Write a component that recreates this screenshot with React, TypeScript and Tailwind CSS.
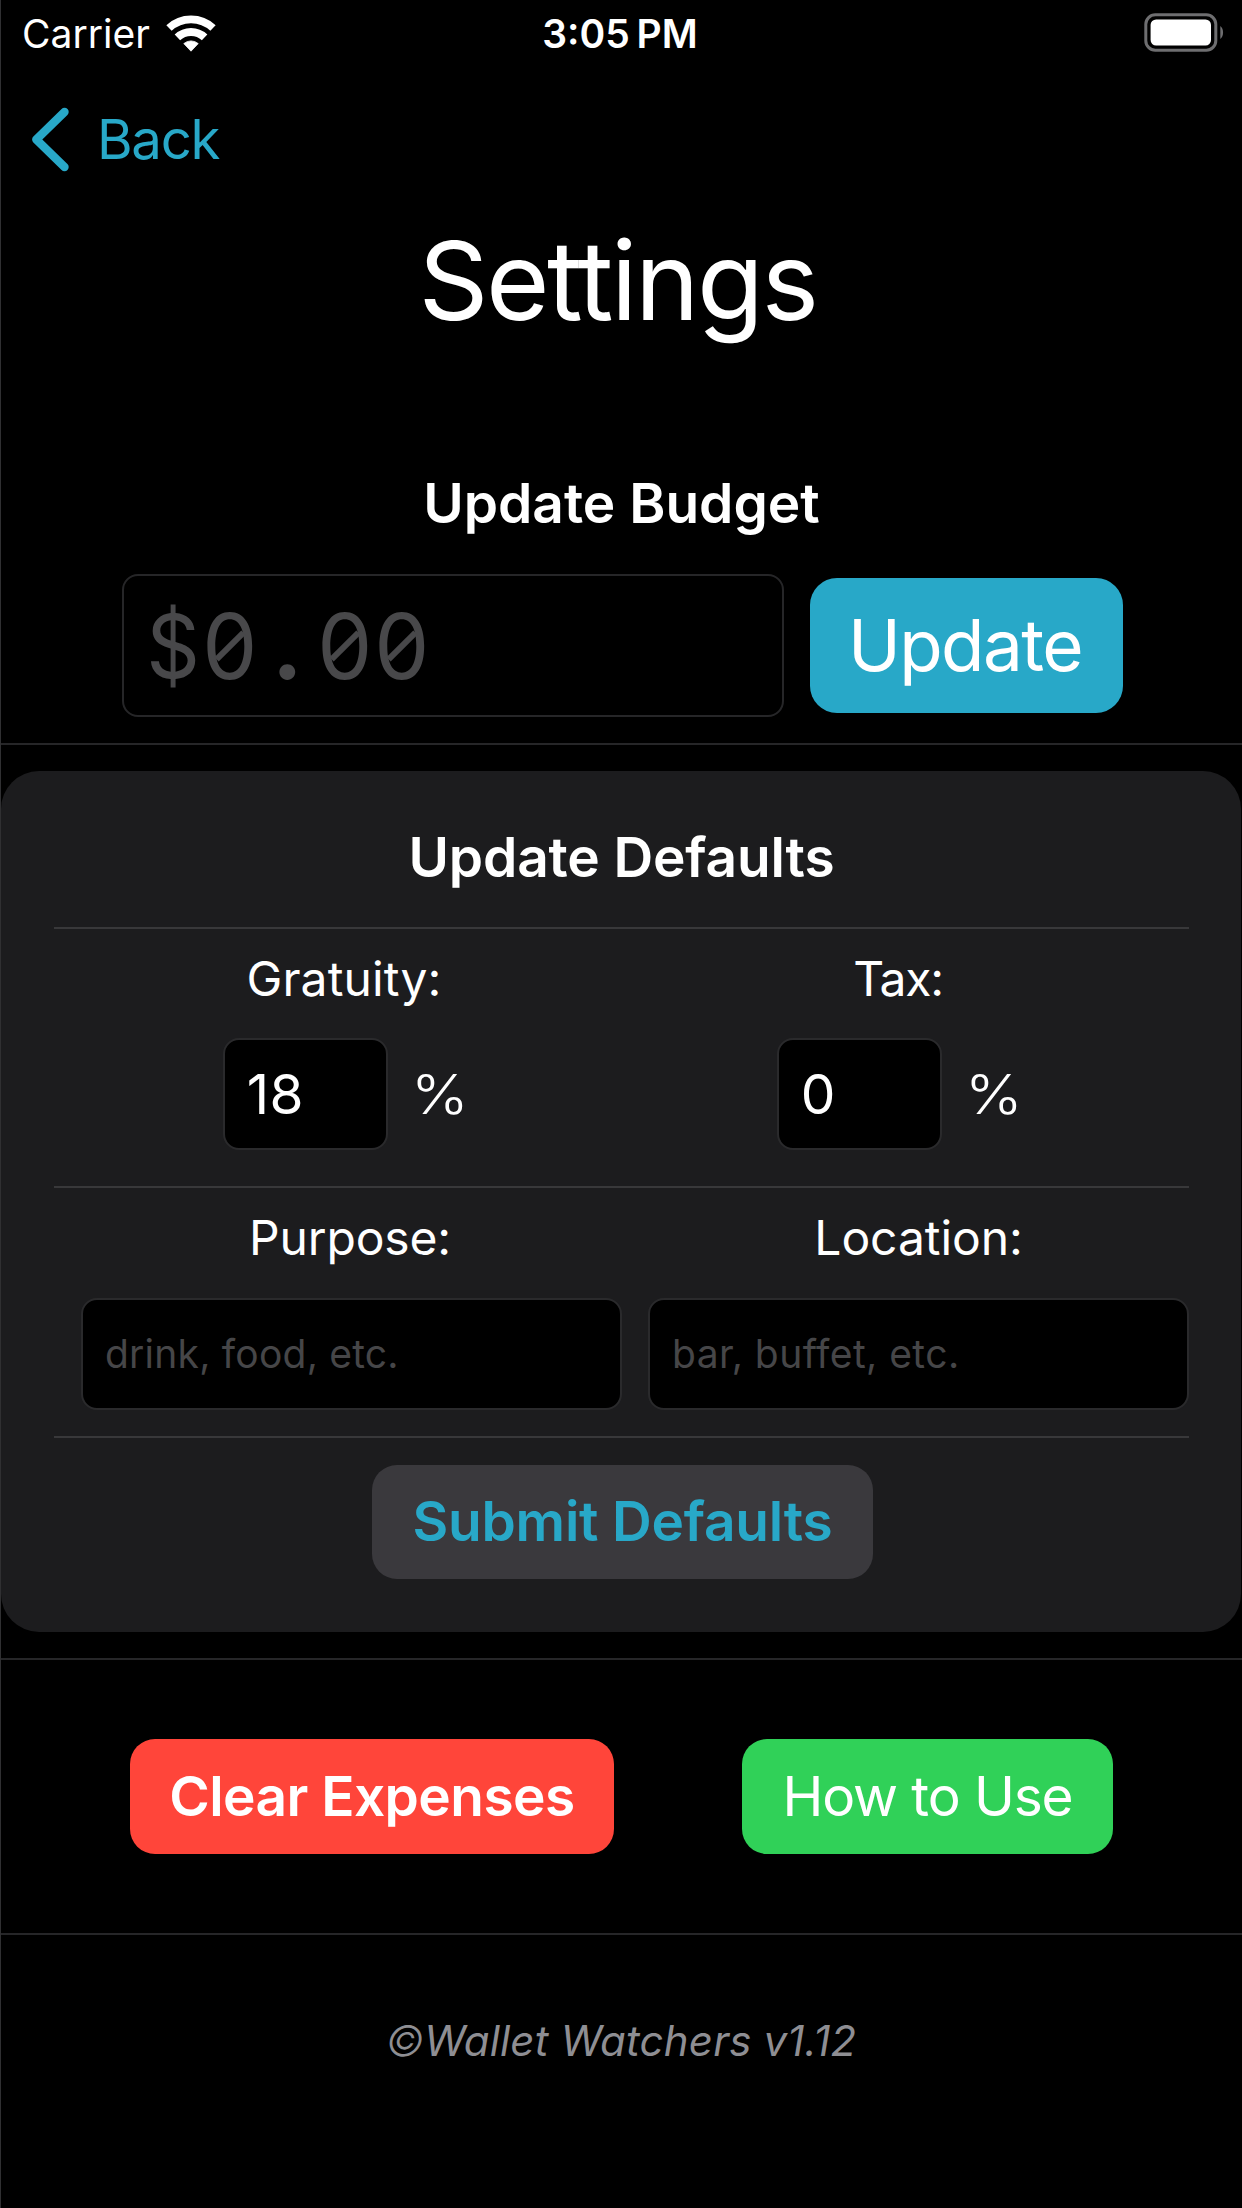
import type { ReactNode } from "react";

function WifiIcon() {
  return (
    <svg width="50" height="37" viewBox="0 0 50 37" fill="none" stroke="#fff">
      <path d="M3 13 A32.2 32.2 0 0 1 47 13" strokeWidth="7.8" />
      <path d="M11.4 22.3 A19.8 19.8 0 0 1 38.6 22.3" strokeWidth="8" />
      <path d="M25 36.2 L17.8 28.6 A11 11 0 0 1 32.2 28.6 Z" fill="#fff" stroke="#fff" strokeWidth="0.8" strokeLinejoin="round" />
    </svg>
  );
}

function BatteryIcon() {
  return (
    <svg width="80" height="39" viewBox="0 0 80 39" fill="none">
      <rect x="1.8" y="1.8" width="70" height="35.4" rx="9.5" stroke="#6e6e70" strokeWidth="3" />
      <rect x="6.6" y="6.5" width="60.4" height="26" rx="5.5" fill="#fff" />
      <path d="M76.3 13 C80 15.5 80 23.5 76.3 26 Z" fill="#6e6e70" />
    </svg>
  );
}

function Divider({ inset = false }: { inset?: boolean }) {
  return <div className={inset ? "h-[2px] bg-[#38383a]" : "h-[2px] bg-[#262628]"} />;
}

function MonoCell({ children }: { children: ReactNode }) {
  return <span className="flex w-[57.3px] justify-center">{children}</span>;
}

function SlashedZero() {
  return (
    <MonoCell>
      <span className="relative flex w-full justify-center">
        <span className="scale-x-[0.96]">0</span>
        <span className="absolute left-1/2 top-1/2 h-[6px] w-[38px] -translate-x-1/2 -translate-y-1/2 -rotate-45 bg-[#48484a]" />
      </span>
    </MonoCell>
  );
}

function PercentField({ label, value, labelClass }: { label: string; value: string; labelClass: string }) {
  return (
    <div className="flex w-[528px] flex-col items-center">
      <div className={labelClass}>{label}</div>
      <div className="mt-[30px] flex items-center gap-[26px]">
        <div className="flex h-[112px] w-[165px] items-center rounded-[16px] border-2 border-[#2a2a2c] bg-black pl-[22px] text-[55px] tracking-[0.5px]">
          {value}
        </div>
        <span className="scale-x-[1.12] text-[55px] font-light">%</span>
      </div>
    </div>
  );
}

function TextField({ label, placeholder, labelClass, tracking }: { label: string; placeholder: string; labelClass: string; tracking: string }) {
  return (
    <div className="flex w-[541px] flex-col items-center">
      <div className={labelClass}>{label}</div>
      <div className={`mt-[32px] flex h-[112px] w-full items-center rounded-[16px] border-2 border-[#2a2a2c] bg-black pl-[22px] pt-[1px] text-[39px] text-[#464648] ${tracking}`}>
        {placeholder}
      </div>
    </div>
  );
}

export default function App() {
  return (
    <div className="relative h-[2208px] w-[1242px] overflow-hidden bg-black font-['Inter',sans-serif] text-white">
      <header className="grid h-[68px] grid-cols-3 items-center">
        <div className="flex items-center gap-[16px] pl-[22px] pt-[1px]">
          <span className="text-[39px]">Carrier</span>
          <div className="mb-[3px]"><WifiIcon /></div>
        </div>
        <div className="mr-[2px] text-center text-[39px] font-semibold [word-spacing:-3px]">3:05 PM</div>
        <div className="mb-[3px] flex justify-end pr-[18px]">
          <BatteryIcon />
        </div>
      </header>

      <nav className="flex h-[142px] items-center pl-[30px] text-[#28a8c8]">
        <svg width="42" height="66" viewBox="0 0 42 66" fill="none" stroke="currentColor" strokeWidth="8.4" strokeLinecap="round" strokeLinejoin="round">
          <path d="M34.5 6 L6.3 33.5 L34.5 61" />
        </svg>
        <span className="ml-[25px] pt-[2px] text-[54.5px] tracking-[-1.3px]">Back</span>
      </nav>

      <h1 className="mr-[7px] h-[138px] text-center text-[109px] leading-[140px] tracking-[-2.4px]">Settings</h1>

      <h2 className="mt-[122px] h-[66px] pl-[1px] text-center text-[55px] font-semibold leading-[66px]">Update Budget</h2>
      <div className="mt-[38px] flex h-[143px] items-center pl-[122px]">
        <div className="flex h-full w-[662px] items-center rounded-[16px] border-2 border-[#262628] pl-[20px] text-[91px] text-[#48484a]">
          <div className="flex items-baseline leading-[110px]">
            <MonoCell><span className="ml-[2px] scale-x-[0.92] scale-y-[0.97]">$</span></MonoCell>
            <SlashedZero />
            <MonoCell><span className="text-[120px] leading-[90px]">.</span></MonoCell>
            <SlashedZero />
            <SlashedZero />
          </div>
        </div>
        <button className="ml-[26px] flex h-[135px] w-[313px] items-center justify-center rounded-[27px] bg-[#28a8c8] pr-[3px] text-[71px] tracking-[-1.56px]">
          Update
        </button>
      </div>

      <div className="mt-[26px]"><Divider /></div>

      <section className="mx-px mt-[26px] h-[861px] rounded-[38px] bg-[#1c1c1e] pl-[53px] pr-[52px] pt-[53px]">
        <h2 className="mb-[37px] h-[66px] text-center text-[55px] font-semibold leading-[66px] tracking-[-0.15px]">Update Defaults</h2>
        <Divider inset />
        <div className="mb-[36px] mt-[21px] flex gap-[26px] pl-[26px]">
          <PercentField label="Gratuity:" value="18" labelClass="h-[58px] text-[48px] leading-[58px] tracking-[0.12px]" />
          <PercentField label="Tax:" value="0" labelClass="h-[58px] text-[48px] leading-[58px] tracking-[-1.24px]" />
        </div>
        <Divider inset />
        <div className="mb-[26px] mt-[20px] flex gap-[26px] pl-[27px]">
          <TextField label="Purpose:" placeholder="drink, food, etc." labelClass="mr-[3px] h-[58px] text-[48px] leading-[60px] tracking-[-0.15px]" tracking="tracking-[0.22px]" />
          <TextField label="Location:" placeholder="bar, buffet, etc." labelClass="h-[58px] text-[48px] leading-[60px] tracking-[-0.08px]" tracking="tracking-[0.44px]" />
        </div>
        <Divider inset />
        <button className="ml-[318px] mt-[27px] flex h-[114px] w-[501px] items-center justify-center rounded-[25px] bg-[#3a393d] pb-[2px] text-[55px] font-semibold tracking-[-0.2px] text-[#28a8c8]">
          Submit Defaults
        </button>
      </section>

      <div className="mt-[26px]"><Divider /></div>

      <div className="my-[79px] flex gap-[128px] pl-[130px]">
        <button className="flex h-[115px] w-[484px] items-center justify-center rounded-[25px] bg-[#ff453a] text-[55px] font-semibold tracking-[-0.57px]">
          Clear Expenses
        </button>
        <button className="flex h-[115px] w-[371px] items-center justify-center rounded-[25px] bg-[#30d158] text-[55px] tracking-[-1.11px]">
          How to Use
        </button>
      </div>

      <Divider />

      <footer className="mt-[80px] text-center text-[42px] italic leading-[51px] tracking-[0.18px] text-[#8e8e93]">
        <span className="font-light">©</span>Wallet Watchers v1.12
      </footer>

      <div className="pointer-events-none absolute inset-y-0 left-0 w-px bg-[#303032]" />
    </div>
  );
}
